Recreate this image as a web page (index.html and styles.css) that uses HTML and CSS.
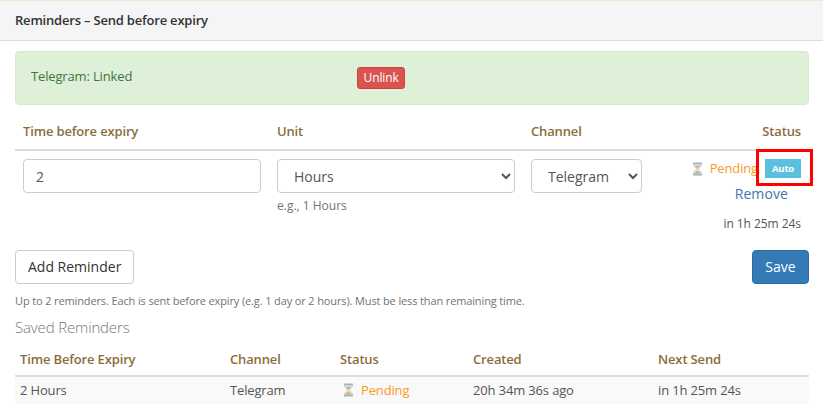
FILE: index.html
```html
<!DOCTYPE html>
<html lang="en">
<head>
<meta charset="utf-8">
<title>Reminders</title>
<link rel="stylesheet" href="styles.css">
</head>
<body>
<svg class="defs" width="0" height="0" aria-hidden="true">
  <symbol id="hourglass" viewBox="0 0 11 14">
    <path d="M1.5 2h8c0 3-2.5 3.6-3.2 5 .7 1.4 3.2 2 3.2 5h-8c0-3 2.5-3.6 3.2-5C4 5.6 1.5 5 1.5 2z" fill="#dfe9f0" stroke="#b4c6d2" stroke-width=".7"/>
    <path d="M2.8 3.8h5.4C7.6 5 6 5.6 5.5 7 5 5.6 3.4 5 2.8 3.8zM2.6 11.6c.3-1.6 2.2-2 2.9-3 .7 1 2.6 1.4 2.9 3z" fill="#eaa75a"/>
    <rect x="1" y=".6" width="9" height="1.6" rx=".5" fill="#9fb6c6"/>
    <rect x="1" y="11.8" width="9" height="1.6" rx=".5" fill="#9fb6c6"/>
  </symbol>
</svg>
<section class="panel">
  <h1 class="panel-heading">Reminders – Send before expiry</h1>
  <div class="panel-body">
    <div class="alert">
      <span class="alert-text">Telegram: Linked</span>
      <button class="btn-unlink" type="button">Unlink</button>
    </div>
    <table class="table form-table">
      <colgroup><col class="c1"><col class="c2"><col class="c3"><col class="c4"></colgroup>
      <thead>
        <tr><th>Time before expiry</th><th>Unit</th><th>Channel</th><th class="right">Status</th></tr>
      </thead>
      <tbody>
        <tr>
          <td><input class="control" type="text" value="2"></td>
          <td>
            <select class="control select"><option>Hours</option></select>
            <div class="hint">e.g., 1 Hours</div>
          </td>
          <td><select class="control select"><option>Telegram</option></select></td>
          <td class="right status-cell">
            <div class="status-line">
              <svg class="hg"><use href="#hourglass"/></svg><span class="pending">Pending</span><span class="auto">Auto<span class="mark"></span></span>
            </div>
            <button class="btn-remove" type="button">Remove</button>
            <div class="next">in 1h 25m 24s</div>
          </td>
        </tr>
      </tbody>
    </table>
    <div class="actions">
      <button class="btn-add" type="button">Add Reminder</button>
      <button class="btn-save" type="button">Save</button>
    </div>
    <p class="help">Up to 2 reminders. Each is sent before expiry (e.g. 1 day or 2 hours). Must be less than remaining time.</p>
    <h2 class="saved-title">Saved Reminders</h2>
    <table class="table saved-table">
      <colgroup><col class="s1"><col class="s2"><col class="s3"><col class="s4"><col class="s5"></colgroup>
      <thead>
        <tr><th>Time Before Expiry</th><th>Channel</th><th>Status</th><th>Created</th><th>Next Send</th></tr>
      </thead>
      <tbody>
        <tr>
          <td>2 Hours</td>
          <td>Telegram</td>
          <td><svg class="hg hg-row"><use href="#hourglass"/></svg><span class="pending">Pending</span></td>
          <td>20h 34m 36s ago</td>
          <td>in 1h 25m 24s</td>
        </tr>
      </tbody>
    </table>
  </div>
</section>
</body>
</html>
```
FILE: styles.css
```css
* { box-sizing: border-box; }
html, body { margin: 0; padding: 0; height: 409px; overflow: hidden; }
body {
  background: #fff;
  color: #555;
  font-family: "Open Sans", sans-serif;
  font-size: 13px;
  letter-spacing: -0.15px;
  line-height: 1.42857;
}
.defs { position: absolute; }
.panel { border-top: 1px solid #f1e6d0; }
.panel-heading {
  margin: 0;
  height: 40px;
  padding: 10px 15px;
  background: #f5f5f5;
  border-bottom: 1px solid #ddd;
  color: #333;
  font-size: 13px;
  font-weight: 600;
  letter-spacing: -0.2px;
  line-height: 19px;
}
.panel-body { padding: 10px 14px 0 15px; }
.alert {
  display: flex;
  height: 54px;
  padding: 15px;
  background: #dff0d8;
  border: 1px solid #d6e9c6;
  border-radius: 4px;
  color: #3c763d;
}
.alert-text { width: 326px; line-height: 19px; }
.btn-unlink {
  height: 22px;
  margin-top: 0;
  padding: 0 5.5px;
  background: #d9534f;
  border: 1px solid #d43f3a;
  border-radius: 3px;
  color: #fff;
  font: 12px/1.5 "Open Sans", sans-serif;
  letter-spacing: -0.1px;
}
.table { width: 100%; table-layout: fixed; border-collapse: collapse; }
.table th {
  color: #8a6d3b;
  font-weight: 600;
  text-align: left;
  border-bottom: 2px solid #ddd;
  vertical-align: bottom;
}
.table th.right { text-align: right; }
.right { text-align: right; }
.form-table { margin-top: 8px; }
.form-table th { height: 37px; padding: 8px; line-height: 19px; }
.form-table td { padding: 8px; vertical-align: top; }
.c1, .c2 { width: 254px; }
.c3 { width: 127px; }
.control {
  display: block;
  width: 100%;
  height: 34px;
  padding: 6px 12px;
  background: #fff;
  border: 1px solid #ccc;
  border-radius: 4px;
  color: #555;
  font: 14px/1.42857 "Open Sans", sans-serif;
}
.hint { margin-top: 4px; color: #737373; font-size: 12px; letter-spacing: 0; line-height: 17px; }
.status-cell { padding-right: 8px; }
.status-line { display: flex; justify-content: flex-end; align-items: center; height: 19px; }
.hg { width: 11px; height: 14px; flex: none; }
.pending { color: #fb9a26; margin-left: 7px; }
.auto {
  position: relative;
  margin-left: 7px;
  width: 36px;
  height: 19px;
  background: #5bc0de;
  color: #fff;
  font-size: 9.5px;
  font-weight: 700;
  line-height: 19px;
  text-align: center;
}
.mark {
  position: absolute;
  left: -9px;
  top: -10px;
  width: 57px;
  height: 37px;
  border: 3px solid #f00;
}
.btn-remove {
  display: block;
  margin: -1px 1px 0 auto;
  height: 34px;
  padding: 6px 12px;
  background: none;
  border: 0;
  color: #4a72ac;
  font: 14px/1.42857 "Open Sans", sans-serif;
  letter-spacing: .1px;
}
.next { margin-top: 5px; font-size: 12px; letter-spacing: -0.05px; line-height: 16px; }
.actions { display: flex; justify-content: space-between; margin-top: 10px; }
.btn-add, .btn-save {
  height: 34px;
  padding: 6px 12px;
  border-radius: 4px;
  font: 14px/1.42857 "Open Sans", sans-serif;
}
.btn-add { background: #fff; border: 1px solid #ccc; color: #333; }
.btn-save { width: 57px; background: #337ab7; border: 1px solid #2e6da4; color: #fff; }
.help { margin: 9px 0 0; color: #737373; font-size: 11px; letter-spacing: -0.13px; line-height: 16px; }
.saved-title { margin: 8px 0 0; color: #777; font-size: 15px; font-weight: 300; line-height: 20px; }
.saved-table { margin-top: 5px; }
.saved-table th { height: 34px; padding: 7px 5px 6px; line-height: 19px; }
.saved-table td { height: 28px; padding: 0 5px; background: #f9f9f9; white-space: nowrap; }
.s1 { width: 210px; }
.s2 { width: 110px; }
.s3 { width: 133px; }
.s4 { width: 185px; }
.hg-row { vertical-align: -2px; margin-left: 3px; }
```
